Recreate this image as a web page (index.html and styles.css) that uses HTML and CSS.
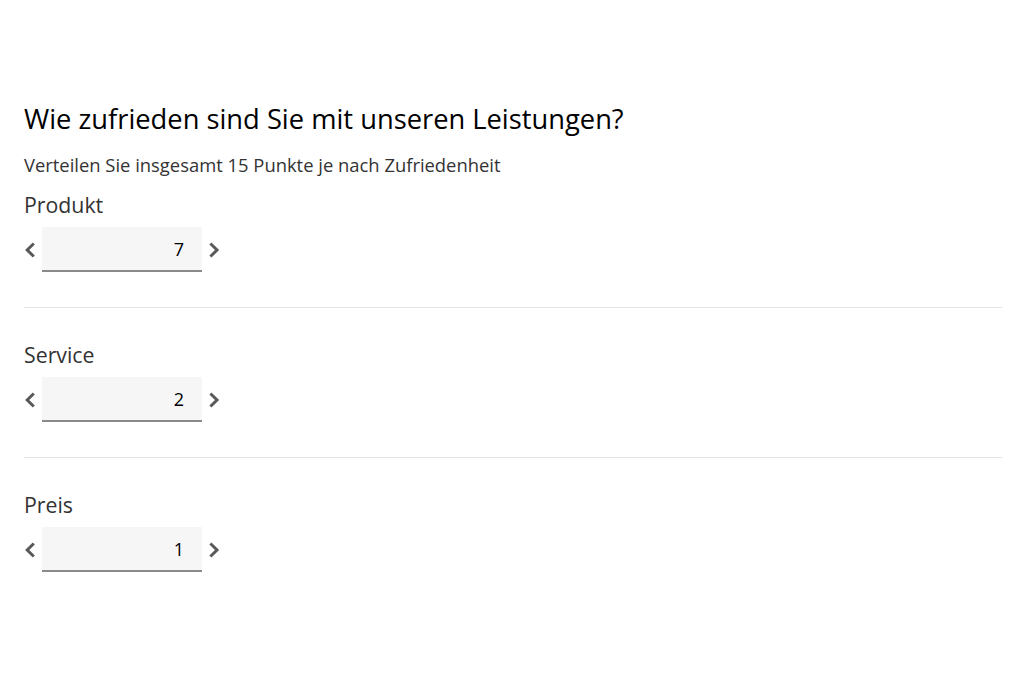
FILE: index.html
```html
<!DOCTYPE html>
<html lang="de">
<head>
<meta charset="utf-8">
<link rel="stylesheet" href="styles.css">
</head>
<body>
<main class="page">
  <h1 class="title">Wie zufrieden sind Sie mit unseren Leistungen?</h1>
  <p class="desc">Verteilen Sie insgesamt 15 Punkte je nach Zufriedenheit</p>
  <section class="item">
    <div class="label">Produkt</div>
    <div class="stepper">
      <button class="arrow" aria-label="weniger"><svg width="12" height="16" viewBox="0 0 12 16"><path d="M9.8 1.5 L3.2 8 L9.8 14.5" fill="none" stroke="#595959" stroke-width="3"/></svg></button>
      <div class="field">7</div>
      <button class="arrow" aria-label="mehr"><svg width="12" height="16" viewBox="0 0 12 16"><path d="M2.4 1.5 L9 8 L2.4 14.5" fill="none" stroke="#595959" stroke-width="3"/></svg></button>
    </div>
  </section>
  <hr class="sep">
  <section class="item">
    <div class="label">Service</div>
    <div class="stepper">
      <button class="arrow" aria-label="weniger"><svg width="12" height="16" viewBox="0 0 12 16"><path d="M9.8 1.5 L3.2 8 L9.8 14.5" fill="none" stroke="#595959" stroke-width="3"/></svg></button>
      <div class="field">2</div>
      <button class="arrow" aria-label="mehr"><svg width="12" height="16" viewBox="0 0 12 16"><path d="M2.4 1.5 L9 8 L2.4 14.5" fill="none" stroke="#595959" stroke-width="3"/></svg></button>
    </div>
  </section>
  <hr class="sep">
  <section class="item">
    <div class="label">Preis</div>
    <div class="stepper">
      <button class="arrow" aria-label="weniger"><svg width="12" height="16" viewBox="0 0 12 16"><path d="M9.8 1.5 L3.2 8 L9.8 14.5" fill="none" stroke="#595959" stroke-width="3"/></svg></button>
      <div class="field">1</div>
      <button class="arrow" aria-label="mehr"><svg width="12" height="16" viewBox="0 0 12 16"><path d="M2.4 1.5 L9 8 L2.4 14.5" fill="none" stroke="#595959" stroke-width="3"/></svg></button>
    </div>
  </section>
</main>
</body>
</html>
```
FILE: styles.css
```css
html, body {
  margin: 0;
  padding: 0;
  background: #ffffff;
}
body {
  font-family: "Open Sans", "Noto Sans", sans-serif;
  color: #333333;
}
.page {
  padding: 101px 23px 0 24px;
  display: flex;
  flex-direction: column;
}
.title {
  margin: 0;
  font-size: 27.3px;
  font-weight: 400;
  line-height: 36px;
  color: #000000;
}
.desc {
  margin: 15px 0 0 0;
  font-size: 18.4px;
  line-height: 26px;
  color: #333333;
}
.item {
  display: flex;
  flex-direction: column;
}
.item:first-of-type {
  margin-top: 12px;
}
.label {
  font-size: 21.3px;
  line-height: 30px;
  color: #333333;
}
.stepper {
  display: flex;
  align-items: center;
  margin-top: 7px;
}
.arrow {
  border: 0;
  background: transparent;
  padding: 0;
  width: 18px;
  height: 45px;
  display: flex;
  align-items: center;
  justify-content: flex-start;
  cursor: pointer;
}
.arrow svg {
  margin-top: 1px;
}
.arrow:last-child {
  justify-content: flex-end;
}
.field {
  width: 160px;
  box-sizing: border-box;
  height: 45px;
  background: #f6f6f6;
  border-bottom: 2px solid #8a8a8a;
  font-size: 18px;
  color: #000000;
  text-align: right;
  padding-right: 18px;
  line-height: 44px;
}
.sep {
  border: 0;
  border-top: 1px solid #e3e3e3;
  margin: 35px 0 32px 0;
  width: 100%;
}
```
